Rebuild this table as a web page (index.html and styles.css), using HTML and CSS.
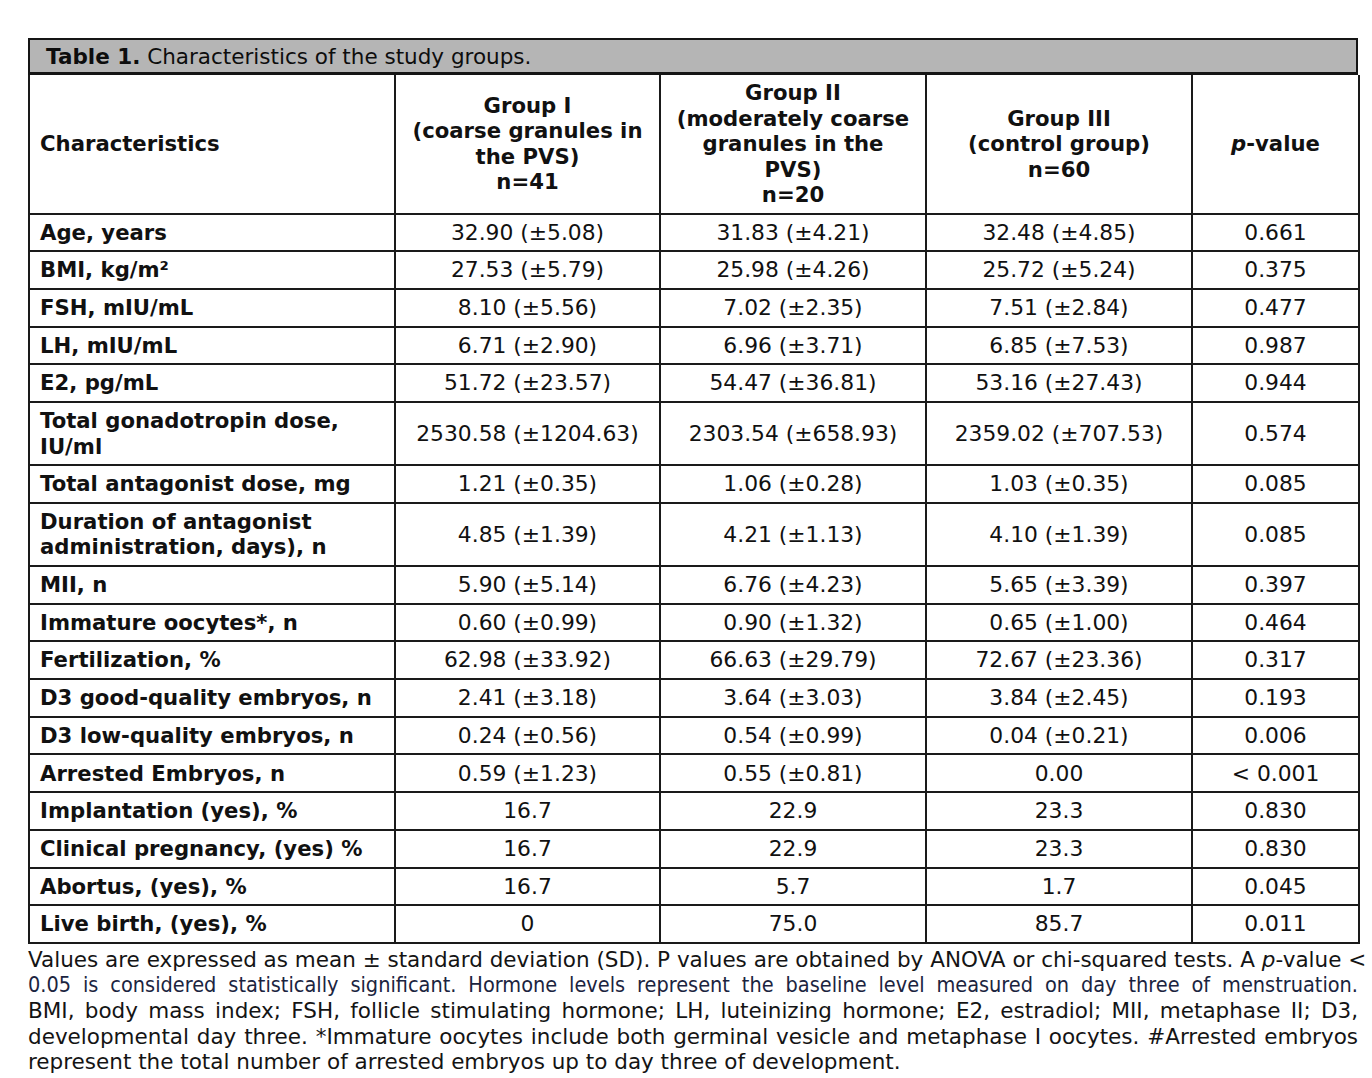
FILE: index.html
```html
<!DOCTYPE html>
<html lang="en">
<head>
<meta charset="utf-8">
<title>Table 1. Characteristics of the study groups</title>
<link rel="stylesheet" href="styles.css">
</head>
<body>
<div class="figure">
  <div class="title-bar"><b>Table 1.</b> Characteristics of the study groups.</div>
  <table class="data">
    <colgroup>
      <col class="c-char">
      <col class="c-g1">
      <col class="c-g2">
      <col class="c-g3">
      <col class="c-p">
    </colgroup>
    <thead>
      <tr>
        <th class="left">Characteristics</th>
        <th>Group I<br>(coarse granules in<br>the PVS)<br>n=41</th>
        <th>Group II<br>(moderately coarse<br>granules in the<br>PVS)<br>n=20</th>
        <th>Group III<br>(control group)<br>n=60</th>
        <th><i>p</i>-value</th>
      </tr>
    </thead>
    <tbody>
      <tr><th class="left">Age, years</th><td>32.90 (±5.08)</td><td>31.83 (±4.21)</td><td>32.48 (±4.85)</td><td>0.661</td></tr>
      <tr><th class="left">BMI, kg/m²</th><td>27.53 (±5.79)</td><td>25.98 (±4.26)</td><td>25.72 (±5.24)</td><td>0.375</td></tr>
      <tr><th class="left">FSH, mIU/mL</th><td>8.10 (±5.56)</td><td>7.02 (±2.35)</td><td>7.51 (±2.84)</td><td>0.477</td></tr>
      <tr><th class="left">LH, mIU/mL</th><td>6.71 (±2.90)</td><td>6.96 (±3.71)</td><td>6.85 (±7.53)</td><td>0.987</td></tr>
      <tr><th class="left">E2, pg/mL</th><td>51.72 (±23.57)</td><td>54.47 (±36.81)</td><td>53.16 (±27.43)</td><td>0.944</td></tr>
      <tr><th class="left">Total gonadotropin dose,<br>IU/ml</th><td>2530.58 (±1204.63)</td><td>2303.54 (±658.93)</td><td>2359.02 (±707.53)</td><td>0.574</td></tr>
      <tr><th class="left">Total antagonist dose, mg</th><td>1.21 (±0.35)</td><td>1.06 (±0.28)</td><td>1.03 (±0.35)</td><td>0.085</td></tr>
      <tr><th class="left">Duration of antagonist<br>administration, days), n</th><td>4.85 (±1.39)</td><td>4.21 (±1.13)</td><td>4.10 (±1.39)</td><td>0.085</td></tr>
      <tr><th class="left">MII, n</th><td>5.90 (±5.14)</td><td>6.76 (±4.23)</td><td>5.65 (±3.39)</td><td>0.397</td></tr>
      <tr><th class="left">Immature oocytes*, n</th><td>0.60 (±0.99)</td><td>0.90 (±1.32)</td><td>0.65 (±1.00)</td><td>0.464</td></tr>
      <tr><th class="left">Fertilization, %</th><td>62.98 (±33.92)</td><td>66.63 (±29.79)</td><td>72.67 (±23.36)</td><td>0.317</td></tr>
      <tr><th class="left">D3 good-quality embryos, n</th><td>2.41 (±3.18)</td><td>3.64 (±3.03)</td><td>3.84 (±2.45)</td><td>0.193</td></tr>
      <tr><th class="left">D3 low-quality embryos, n</th><td>0.24 (±0.56)</td><td>0.54 (±0.99)</td><td>0.04 (±0.21)</td><td>0.006</td></tr>
      <tr><th class="left">Arrested Embryos, n</th><td>0.59 (±1.23)</td><td>0.55 (±0.81)</td><td>0.00</td><td>&lt; 0.001</td></tr>
      <tr><th class="left">Implantation (yes), %</th><td>16.7</td><td>22.9</td><td>23.3</td><td>0.830</td></tr>
      <tr><th class="left">Clinical pregnancy, (yes) %</th><td>16.7</td><td>22.9</td><td>23.3</td><td>0.830</td></tr>
      <tr><th class="left">Abortus, (yes), %</th><td>16.7</td><td>5.7</td><td>1.7</td><td>0.045</td></tr>
      <tr><th class="left">Live birth, (yes), %</th><td>0</td><td>75.0</td><td>85.7</td><td>0.011</td></tr>
    </tbody>
  </table>
  <p class="note">
    <span class="line">Values are expressed as mean ± standard deviation (SD). P values are obtained by ANOVA or chi-squared tests. A <i>p</i>-value &lt;</span>
    <span class="line alt">0.05 is considered statistically significant. Hormone levels represent the baseline level measured on day three of menstruation.</span>
    <span class="line">BMI, body mass index; FSH, follicle stimulating hormone; LH, luteinizing hormone; E2, estradiol; MII, metaphase II; D3,</span>
    <span class="line">developmental day three. *Immature oocytes include both germinal vesicle and metaphase I oocytes. #Arrested embryos</span>
    <span class="line last">represent the total number of arrested embryos up to day three of development.</span>
  </p>
</div>
</body>
</html>
```

FILE: styles.css
```css
html, body {
  margin: 0;
  padding: 0;
  background: #ffffff;
}

body {
  padding: 38px 15px 0 28px;
  font-family: "DejaVu Sans", Verdana, sans-serif;
  color: #111111;
}

.figure {
  width: 1330px;
}

.title-bar {
  background: #b5b5b5;
  border: 2px solid #151515;
  border-bottom-width: 3px;
  padding: 3px 16px 1px;
  font-size: 21.5px;
  line-height: 28px;
  color: #0d0d0d;
}

.data {
  width: 100%;
  border-collapse: collapse;
  table-layout: fixed;
  font-size: 21.8px;
  line-height: 25.5px;
}

.c-char { width: 366px; }
.c-g1 { width: 265px; }
.c-g2 { width: 266px; }
.c-g3 { width: 266px; }
.c-p { width: 167px; }

.data th,
.data td {
  border: 2px solid #1a1a1a;
  padding: 5.1px 10px;
  text-align: center;
  vertical-align: middle;
  white-space: nowrap;
}

.data th {
  font-size: 21.2px;
}

.data thead th {
  font-weight: bold;
  padding-top: 5px;
  padding-bottom: 5px;
}

.data th.left {
  text-align: left;
  font-weight: bold;
}

.data thead tr:first-child th {
  border-top: none;
}

.data td {
  font-weight: normal;
}

.note {
  margin: 3px 0 0;
  font-size: 21.5px;
  line-height: 25.6px;
  color: #141414;
}

.note .line {
  display: block;
  text-align: justify;
  text-align-last: justify;
  white-space: nowrap;
}

.note .line.alt {
  font-family: "DejaVu Sans Condensed", "DejaVu Sans", sans-serif;
  color: #1b2440;
}

.note .line.last {
  text-align-last: left;
}
```
